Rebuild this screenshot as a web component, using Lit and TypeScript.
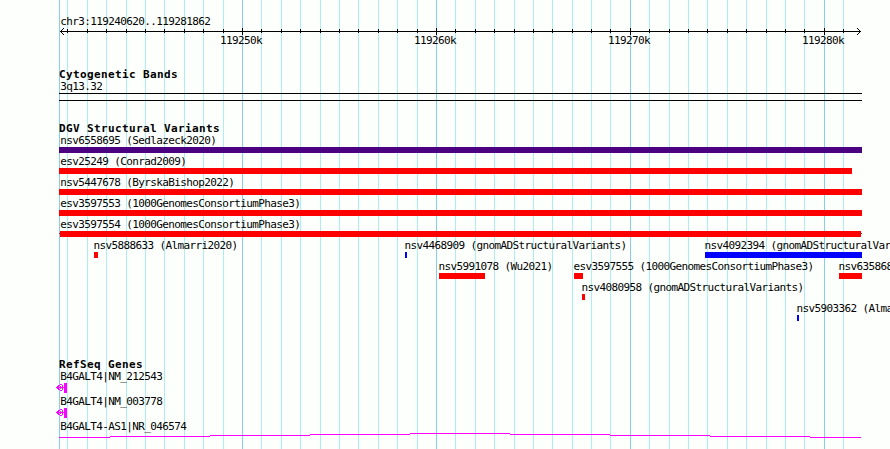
import type { TemplateResult } from 'lit';
import { css, html, LitElement, svg } from 'lit';
import { customElement, property } from 'lit/decorators.js';
import { styleMap } from 'lit/directives/style-map.js';

interface Feature {
  name: string;
  x: number;
  width: number;
  color: string;
  capped?: boolean;
}

const START = 59;
const MAJOR = [59, 242, 436, 630, 824];
const MINOR = [
  67, 87, 106, 126, 145, 164, 184, 203, 223, 261, 281, 300, 320, 339, 358, 378, 397, 417, 455, 475,
  494, 514, 533, 552, 572, 591, 610, 649, 669, 688, 707, 727, 746, 766, 785, 804, 843,
];

const VARIANTS: Feature[][] = [
  [{ name: 'nsv6558695 (Sedlazeck2020)', x: 59, width: 803, color: '#4b0082' }],
  [{ name: 'esv25249 (Conrad2009)', x: 59, width: 793, color: '#f00' }],
  [{ name: 'nsv5447678 (ByrskaBishop2022)', x: 59, width: 803, color: '#f00' }],
  [{ name: 'esv3597553 (1000GenomesConsortiumPhase3)', x: 59, width: 803, color: '#f00' }],
  [{ name: 'esv3597554 (1000GenomesConsortiumPhase3)', x: 59, width: 803, color: '#f00', capped: true }],
  [
    { name: 'nsv5888633 (Almarri2020)', x: 94, width: 4, color: '#f00' },
    { name: 'nsv4468909 (gnomADStructuralVariants)', x: 405, width: 2, color: '#00f' },
    { name: 'nsv4092394 (gnomADStructuralVariants)', x: 705, width: 157, color: '#00f' },
  ],
  [
    { name: 'nsv5991078 (Wu2021)', x: 439, width: 46, color: '#f00' },
    { name: 'esv3597555 (1000GenomesConsortiumPhase3)', x: 574, width: 9, color: '#f00' },
    { name: 'nsv635868', x: 839, width: 23, color: '#f00' },
  ],
  [{ name: 'nsv4080958 (gnomADStructuralVariants)', x: 582, width: 3, color: '#f00' }],
  [{ name: 'nsv5903362 (Almarri2020)', x: 797, width: 2, color: '#00f' }],
];

@customElement('gb-feature')
export class GbFeature extends LitElement {
  @property({ attribute: false })
  feature!: Feature;

  render(): TemplateResult {
    const { name, x, width, color, capped } = this.feature;
    return html`
      <div class=${x === START ? 'name first' : 'name'}>${name}</div>
      <div class=${capped ? 'bar capped' : 'bar'} style=${styleMap({ width: `${width}px`, '--color': color })}></div>
    `;
  }

  static styles = css`
    :host {
      display: block;
    }
    .name {
      height: 12px;
      line-height: 12px;
      margin-left: -0.5px;
    }
    .name.first {
      margin-left: 1.2px;
    }
    .bar {
      height: 6px;
      background: var(--color);
    }
    .bar.capped {
      box-sizing: border-box;
      padding: 0 1px;
      background: linear-gradient(#633, #633) 0 2px / 100% 1px no-repeat;
    }
    .bar.capped::before {
      content: '';
      display: block;
      height: 6px;
      background: var(--color);
    }
  `;
}

@customElement('app-root')
export class AppRoot extends LitElement {
  renderGrid() {
    return html`<svg class="grid" width="890" height="449" shape-rendering="crispEdges">
      ${MINOR.map((x) => svg`<rect x=${x} y="0" width="1" height="449" fill="#afeeee" />`)}
      ${MAJOR.map((x) => svg`<rect x=${x} y="0" width="1" height="449" fill="#87ceeb" />`)}
    </svg>`;
  }

  renderRuler() {
    return html`
      <div class="label">chr3:119240620..119281862</div>
      <svg class="ruler" width="890" height="9" shape-rendering="crispEdges">
        <rect x="60" y="3" width="801" height="1" />
        ${MINOR.map((x) => svg`<rect x=${x} y="1" width="1" height="4" />`)}
        ${MAJOR.slice(1).map((x) => svg`<rect x=${x} y="0" width="1" height="7" />`)}
        <path d="M61 2h1v1h-1zM62 1h1v1h-1zM63 0h1v1h-1zM61 4h1v1h-1zM62 5h1v1h-1zM63 6h1v1h-1z" />
        <path d="M859 2h1v1h-1zM858 1h1v1h-1zM857 0h1v1h-1zM859 4h1v1h-1zM858 5h1v1h-1zM857 6h1v1h-1z" />
      </svg>
      <div class="ticks">
        ${['119250k', '119260k', '119270k', '119280k'].map((t) => html`<span class="tick">${t}</span>`)}
      </div>
    `;
  }

  renderGene(name: string) {
    return html`
      <div class="gene">
        <div class="label">${name}</div>
        <svg class="exon" width="14" height="11" shape-rendering="crispEdges" fill="#f0f">
          <rect x="8" y="0" width="3" height="10" />
          <path
            d="M0 4h8v1h-8zM1 3h2v1h-2zM2 2h2v1h-2zM4 1h2v1h-2zM1 5h2v1h-2zM2 6h2v1h-2zM4 7h2v1h-2zM4 3h1v1h-1zM4 5h1v1h-1zM6 2h1v5h-1z"
          />
        </svg>
      </div>
    `;
  }

  render(): TemplateResult {
    return html`
      <main class="browser">
        ${this.renderGrid()}
        <div class="content">
          <section class="scale">${this.renderRuler()}</section>
          <section class="bands">
            <h2 class="title">Cytogenetic Bands</h2>
            <div class="label">3q13.32</div>
            <div class="band"></div>
          </section>
          <section class="variants">
            <h2 class="title">DGV Structural Variants</h2>
            ${VARIANTS.map(
              (row) => html`
                <div class="row">
                  ${row.map(
                    (f) => html`<gb-feature class="feature" .feature=${f} style=${styleMap({ left: `${f.x}px` })}></gb-feature>`,
                  )}
                </div>
              `,
            )}
          </section>
          <section class="genes">
            <h2 class="title">RefSeq Genes</h2>
            ${this.renderGene('B4GALT4|NM_212543')} ${this.renderGene('B4GALT4|NM_003778')}
            <div class="label">B4GALT4-AS1|NR_046574</div>
            <svg class="intron" width="890" height="8" shape-rendering="crispEdges" fill="#f0f">
              ${[4, 3, 2, 1, 0, 1, 2, 3, 4].map((y, i) => {
                const from = i === 0 ? START : 10 + i * 100;
                const to = i === 8 ? 861 : 110 + i * 100;
                return svg`<rect x=${from} y=${y} width=${to - from} height="1" />`;
              })}
            </svg>
          </section>
        </div>
      </main>
    `;
  }

  static styles = css`
    :host {
      display: block;
    }
    .browser {
      position: relative;
      width: 890px;
      height: 449px;
      overflow: hidden;
      background: #fdfffc;
      color: #000;
      font: 11px 'DejaVu Sans Mono', monospace;
      letter-spacing: -0.622px;
      white-space: nowrap;
    }
    .grid {
      position: absolute;
      inset: 0;
    }
    .content {
      position: relative;
      display: flex;
      flex-direction: column;
    }
    svg {
      display: block;
    }
    .label {
      height: 12px;
      line-height: 12px;
      padding-left: 60.2px;
    }
    .title {
      margin: 0;
      height: 12px;
      padding-left: 59px;
      font-size: 11px;
      line-height: 12px;
      font-weight: 700;
      letter-spacing: 0.378px;
    }
    .scale {
      box-sizing: border-box;
      height: 69px;
      padding-top: 16px;
    }
    .ticks {
      display: grid;
      grid-template-columns: repeat(4, 194px);
      padding-left: 220px;
      margin-top: -2px;
      line-height: 12px;
    }
    .bands {
      height: 54px;
    }
    .band {
      box-sizing: border-box;
      width: 803px;
      height: 8px;
      margin-left: 59px;
      border: solid #000;
      border-width: 1px 0;
    }
    .variants {
      height: 236px;
    }
    .row {
      position: relative;
      height: 21px;
    }
    .feature {
      position: absolute;
      top: 0;
    }
    .gene {
      height: 25px;
    }
    .exon {
      margin-left: 56px;
    }
  `;
}

declare global {
  interface HTMLElementTagNameMap {
    'gb-feature': GbFeature;
    'app-root': AppRoot;
  }
}
